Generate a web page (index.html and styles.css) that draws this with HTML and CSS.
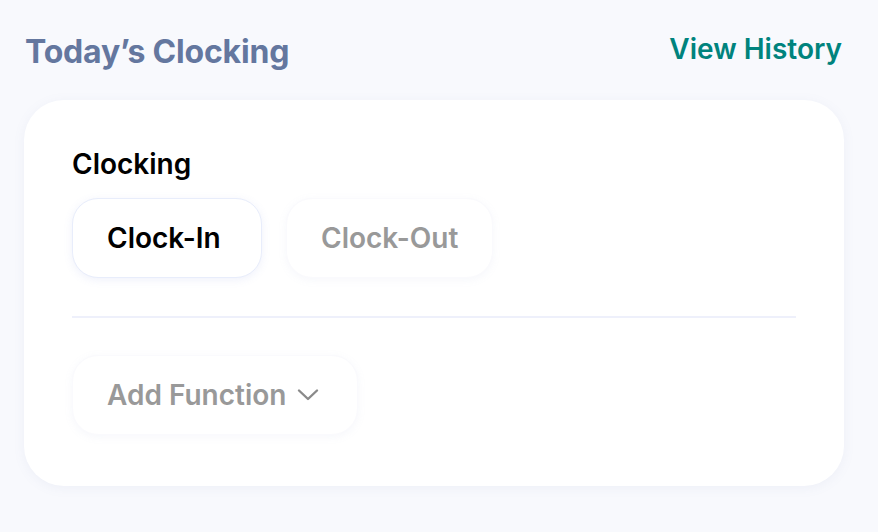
FILE: index.html
```html
<!DOCTYPE html>
<html>
<head>
<meta charset="utf-8">
<link rel="stylesheet" href="styles.css">
</head>
<body>
<div class="page">
  <div class="header">
    <h2 class="title">Today’s Clocking</h2>
    <a class="link">View History</a>
  </div>
  <div class="card">
    <div class="label">Clocking</div>
    <div class="choices">
      <div class="btn active">Clock-In</div>
      <div class="btn">Clock-Out</div>
    </div>
    <div class="divider"></div>
    <div class="btn add">Add Function
      <svg class="chev" width="22" height="14" viewBox="0 0 22 14"><path d="M2 2.5 L11 11 L20 2.5" fill="none" stroke="#8a8a8a" stroke-width="2.4" stroke-linecap="round" stroke-linejoin="round"/></svg>
    </div>
  </div>
</div>
</body>
</html>
```
FILE: styles.css
```css
* { box-sizing: border-box; }
html, body { margin: 0; padding: 0; }
body {
  background: #f8f9fd;
  font-family: Inter, "Noto Sans", sans-serif;
  width: 878px;
  height: 532px;
  overflow: hidden;
}
.page {
  padding: 32px 34px 0 24px;
}
.header {
  display: flex;
  justify-content: space-between;
  align-items: flex-start;
  padding-left: 1px;
  padding-right: 2px;
  height: 39px;
}
.title {
  margin: 0;
  font-size: 32px;
  line-height: normal;
  font-weight: 700;
  color: #64779f;
  letter-spacing: -0.2px;
}
.link {
  font-size: 28px;
  line-height: normal;
  font-weight: 600;
  color: #00837d;
}
.card {
  margin-top: 29px;
  background: #fff;
  border-radius: 40px;
  padding: 47px 48px 48px 48px;
  box-shadow: 0 2px 12px rgba(120, 130, 180, 0.08);
  height: 386px;
}
.label {
  font-size: 28px;
  font-weight: 600;
  color: #000;
  line-height: 34px;
}
.choices {
  display: flex;
  gap: 24px;
  margin-top: 17px;
}
.btn {
  height: 80px;
  border-radius: 26px;
  padding: 0 34px;
  display: inline-flex;
  align-items: center;
  font-size: 28px;
  font-weight: 600;
  color: #999;
  background: #fff;
  border: 1px solid #fafafd;
  box-shadow: 0 2px 8px rgba(140, 150, 200, 0.08);
}
.btn.active {
  width: 190px;
  color: #000;
  border-color: #e8edfb;
  box-shadow: 0 2px 8px rgba(120, 140, 220, 0.12);
}
.divider {
  height: 2px;
  background: #eef0fb;
  margin: 38px 0 37px 0;
}
.add { gap: 11px; padding-right: 38px; }
.chev { display: block; }
```
